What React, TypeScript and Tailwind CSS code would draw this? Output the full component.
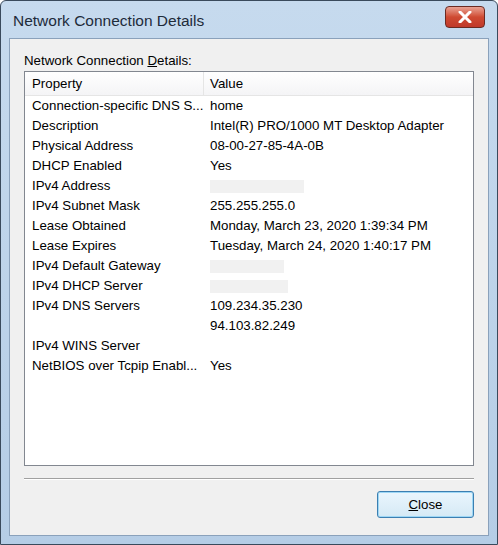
import React from 'react'

const rows: [string, string | null, number?][] = [
  ['Connection-specific DNS S...', 'home'],
  ['Description', 'Intel(R) PRO/1000 MT Desktop Adapter'],
  ['Physical Address', '08-00-27-85-4A-0B'],
  ['DHCP Enabled', 'Yes'],
  ['IPv4 Address', null, 94],
  ['IPv4 Subnet Mask', '255.255.255.0'],
  ['Lease Obtained', 'Monday, March 23, 2020 1:39:34 PM'],
  ['Lease Expires', 'Tuesday, March 24, 2020 1:40:17 PM'],
  ['IPv4 Default Gateway', null, 74],
  ['IPv4 DHCP Server', null, 78],
  ['IPv4 DNS Servers', '109.234.35.230'],
  ['', '94.103.82.249'],
  ['IPv4 WINS Server', ''],
  ['NetBIOS over Tcpip Enabl...', 'Yes'],
]

export default function App() {
  return (
    <div className="w-[498px] h-[545px] rounded-t-[6px] border border-[#3a4a5c] bg-gradient-to-b from-[#c6daee] to-[#b5cde6] px-[8px] flex flex-col text-[13.3px] text-black" style={{ fontFamily: '"Liberation Sans", Arial, sans-serif' }}>
      <div className="h-[37px] flex items-center justify-between pl-[4px] pr-[4px] shrink-0">
        <span className="text-[15.5px] text-[#1e2b3a] pt-[3px]">Network Connection Details</span>
        <div className="w-[40px] h-[22px] mt-[-6px] rounded-[4px] border border-[#6b2a22] bg-gradient-to-b from-[#e8a193] via-[#cf4a32] to-[#c0392b] flex items-center justify-center">
          <svg width="14" height="12" viewBox="0 0 14 12"><path d="M2 1 L12 11 M12 1 L2 11" stroke="#fff" strokeWidth="3" strokeLinecap="round" /></svg>
        </div>
      </div>
      <div className="flex-1 bg-[#f0f0f0] border border-[#8aa1bb] mb-[8px] flex flex-col px-[14px]">
        <div className="pt-[12px] h-[32px]">Network Connection <u>D</u>etails:</div>
        <div className="h-[395px] border border-[#828790] bg-white">
          <div className="flex h-[24px] items-center border-b border-[#e5e5e5] bg-gradient-to-b from-white to-[#f4f4f6]">
            <div className="w-[179px] pl-[7px] border-r border-[#e5e5e5] h-full flex items-center">Property</div>
            <div className="pl-[6px]">Value</div>
          </div>
          {rows.map(([k, v, w], i) => (
            <div key={i} className="flex h-[20px] items-center">
              <div className="w-[179px] pl-[7px] whitespace-nowrap overflow-hidden">{k}</div>
              <div className="pl-[6px] whitespace-nowrap">
                {v === null ? <div className="h-[13px] bg-[#f1f1f1]" style={{ width: w }} /> : v}
              </div>
            </div>
          ))}
        </div>
        <div className="mt-[12px] border-t border-[#a0a0a0] border-b-white border-b h-[2px]" />
        <div className="flex justify-end mt-[11px]">
          <button className="w-[97px] h-[27px] rounded-[3px] border border-[#3c7fb1] bg-gradient-to-b from-[#eaf6fd] to-[#d5e9f5] shadow-[inset_0_0_0_1px_#9ed7f5]"><u>C</u>lose</button>
        </div>
      </div>
    </div>
  )
}
